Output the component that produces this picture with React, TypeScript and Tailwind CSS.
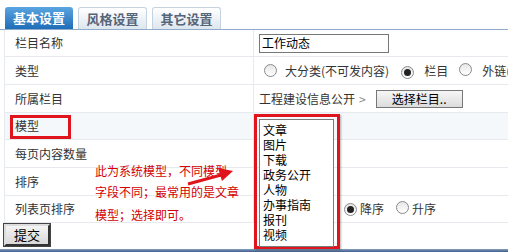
import React from "react";

const font = { fontFamily: '"Noto Sans CJK SC", "Liberation Sans", sans-serif' };

function Radio({ checked = false }: { checked?: boolean }) {
  return (
    <span className="inline-flex h-[13px] w-[13px] shrink-0 items-center justify-center rounded-full border border-[#8a8a8a] bg-gradient-to-b from-[#e6e6e6] to-white">
      {checked && <span className="h-[7px] w-[7px] rounded-full bg-[#222]" />}
    </span>
  );
}

function Row({
  label,
  h,
  bg = "bg-white",
  children,
}: {
  label: string;
  h: string;
  bg?: string;
  children?: React.ReactNode;
}) {
  return (
    <div className={`flex ${h} ${bg} border-b border-[#e6eaee]`}>
      <div className="flex w-[249px] shrink-0 items-center pl-[10px] text-[12px] text-[#333] border-r border-[#e6eaee]">
        {label}
      </div>
      <div className="flex min-w-0 flex-1 items-center overflow-hidden whitespace-nowrap pl-[5px] text-[12px] text-[#333]">
        {children}
      </div>
    </div>
  );
}

export default function App() {
  const models = ["文章", "图片", "下载", "政务公开", "人物", "办事指南", "报刊", "视频"];
  return (
    <div className="relative h-[252px] w-[508px] overflow-hidden bg-white" style={font}>
      {/* tabs */}
      <div className="flex h-[29px] items-end gap-[5px] pl-[5px]">
        <div className="flex h-[22px] w-[68px] items-center justify-center rounded-t-[3px] bg-gradient-to-b from-[#5aa5e0] to-[#1d6db8] text-[13px] font-bold text-white">
          基本设置
        </div>
        <div className="flex h-[22px] w-[69px] items-center justify-center rounded-t-[3px] border border-b-0 border-[#c5d3e0] bg-gradient-to-b from-white to-[#dde6ee] text-[13px] font-bold text-[#55657a]">
          风格设置
        </div>
        <div className="flex h-[22px] w-[69px] items-center justify-center rounded-t-[3px] border border-b-0 border-[#c5d3e0] bg-gradient-to-b from-white to-[#dde6ee] text-[13px] font-bold text-[#55657a]">
          其它设置
        </div>
      </div>
      <div className="h-px bg-[#8eabcb]" />

      {/* form table */}
      <div className="ml-[4px] border-l border-[#e6eaee]">
        <Row label="栏目名称" h="h-[27px]">
          <div className="flex h-[19px] w-[130px] items-center border border-[#777] pl-[2px] text-[12px] text-black">
            工作动态
          </div>
        </Row>
        <Row label="类型" h="h-[28px]">
          <div className="flex items-center pl-[5px]">
            <Radio />
            <span className="ml-[8px]">大分类(不可发内容)</span>
            <span className="ml-[12px]"><Radio checked /></span>
            <span className="ml-[10px]">栏目</span>
            <span className="ml-[11px]"><Radio /></span>
            <span className="ml-[10px]">外链(</span>
          </div>
        </Row>
        <Row label="所属栏目" h="h-[28px]">
          <span>工程建设信息公开</span>
          <span className="ml-[4px] text-[#888]">&gt;</span>
          <button className="ml-[10px] flex h-[18px] w-[87px] items-center justify-center border border-[#777] bg-gradient-to-b from-[#f6f6f6] to-[#dcdcdc] text-[12px] text-black">
            选择栏目..
          </button>
        </Row>
        <Row label="模型" h="h-[27px]" bg="bg-[#f4f8fb]" />
        <Row label="每页内容数量" h="h-[28px]" />
        <Row label="排序" h="h-[28px]" />
        <Row label="列表页排序" h="h-[27px]">
          <div className="flex items-center pl-[85px]">
            <Radio checked />
            <span className="ml-[3px]">降序</span>
            <span className="ml-[12px]"><Radio /></span>
            <span className="ml-[3px]">升序</span>
          </div>
        </Row>
      </div>

      <div className="pl-[4px] pt-[1px]">
        <button className="flex h-[22px] w-[46px] items-center justify-center border-2 border-t-[#ddd] border-l-[#ddd] border-r-[#333] border-b-[#333] outline outline-1 outline-[#444] bg-gradient-to-b from-[#f4f4f4] to-[#d8d8d8] text-[13px] text-black">
          提交
        </button>
      </div>
      <div className="absolute bottom-0 left-0 h-[3px] w-full bg-gradient-to-b from-[#8aa0bd] to-[#3b5d8a]" />

      {/* annotations */}
      <div className="absolute left-[10px] top-[115px] h-[24px] w-[61px] border-[3px] border-[#e0141c]" />
      <div className="absolute left-[95px] top-[160px] text-[12px] leading-[22px] text-[#d40000]">
        <div>此为系统模型，不同模型</div>
        <div className="mt-[-1px]">字段不同；最常用的是文章</div>
        <div className="mt-[1px]">模型；选择即可。</div>
      </div>
      <svg className="absolute left-[185px] top-[164px]" width="52" height="24" viewBox="0 0 52 24">
        <line x1="3" y1="20" x2="36" y2="11" stroke="#e0141c" strokeWidth="3" />
        <polygon points="48,7 33,4 37,17" fill="#e0141c" />
      </svg>

      {/* open model select */}
      <div className="absolute left-[254px] top-[114px] h-[135px] w-[86px] border-[3px] border-[#e0141c] shadow-[1px_1px_2px_rgba(0,0,0,0.3)]">
        <div className="ml-[2px] mt-[2px] h-[128px] w-[75px] border border-[#7a7a7a] bg-white pl-[3px] pt-[2px] text-[12px] leading-[15px] text-black">
          {models.map((m) => (
            <div key={m}>{m}</div>
          ))}
        </div>
      </div>
    </div>
  );
}
